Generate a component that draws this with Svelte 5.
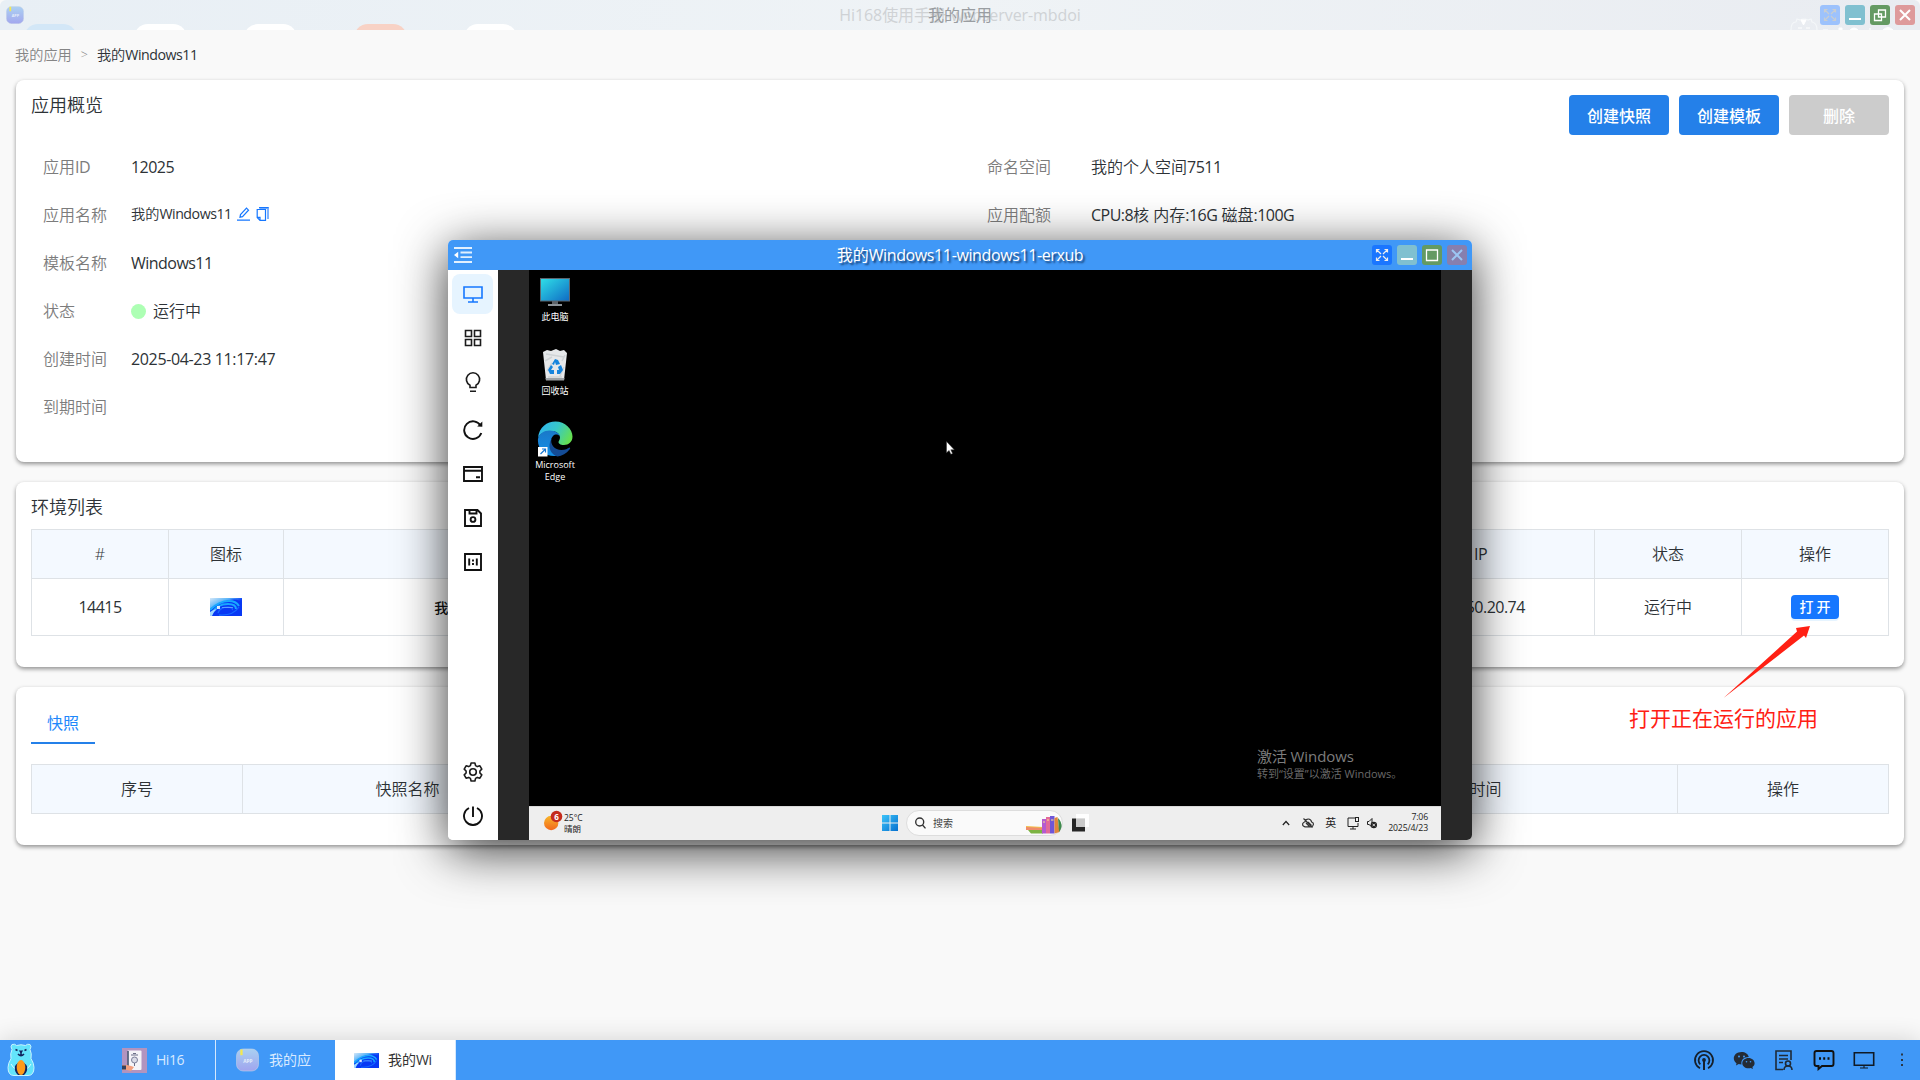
<script>
  const left = [
    { label: '应用ID', value: '12025' },
    { label: '应用名称', cjk: '我的', value: 'Windows11', small: true },
    { label: '模板名称', value: 'Windows11' },
    { label: '状态', cjk: '运行中', dot: true },
    { label: '创建时间', value: '2025-04-23 11:17:47', wide: true },
    { label: '到期时间' }
  ];
</script>

{#snippet bloom()}
  <svg class="bloom" viewBox="0 0 32 18" preserveAspectRatio="none">
    <defs>
      <linearGradient id="bl" x1="0" y1="0" x2="1" y2="1">
        <stop offset="0" stop-color="#d6e8f8" /><stop offset=".3" stop-color="#5ab4f8" />
        <stop offset=".55" stop-color="#0a3cf5" /><stop offset="1" stop-color="#0030e0" />
      </linearGradient>
    </defs>
    <rect width="32" height="18" fill="url(#bl)" />
    <path d="M0 11Q8 4 20 2q9-2 12 4v12H0z" fill="#0838f4" />
    <path d="M0 12Q9 3 19 3q7 0 10 5M2 15Q7 6 18 6q8 0 8 5" fill="none" stroke="#18a8ff" stroke-width="2" />
    <path d="M9 17q14 1 20-8M8 15q2-6 10-6 6 1 4 3" fill="none" stroke="#1668ff" stroke-width="1.300" />
    <path d="M0 14q4-3 7-3-4 3-5 7H0z" fill="#9fd8ff" />
    <rect x="7" y="8" width="3" height="3" fill="#fff" opacity=".85" />
    <path d="M12 9.500h11" stroke="#8cc8ff" opacity=".6" />
  </svg>
{/snippet}

{#snippet appIcon()}
  <svg viewBox="0 0 24 24">
    <defs>
      <linearGradient id="ap" x1="0" y1="0" x2="0" y2="1">
        <stop offset="0" stop-color="#a9d0f2" /><stop offset="1" stop-color="#a0a4ee" />
      </linearGradient>
    </defs>
    <rect x=".5" y=".5" width="23" height="23" rx="7" fill="url(#ap)" stroke="#c5d3e6" stroke-width=".6" />
    <rect x="4.5" y="1" width="2.4" height="6" fill="#f4e84e" />
    <text x="12.5" y="15" text-anchor="middle" class="apptext">APP</text>
  </svg>
{/snippet}

<div class="desk">
  <header class="bar">
    <div class="bumps"><i class="b1"></i><i></i><i></i><i class="b4"></i><i></i></div>
    <div class="app-ic">{@render appIcon()}</div>
    <span class="ghost">Hi168使用手册-webserver-mbdoi</span>
    <span class="bar-title">我的应用</span>
    <svg class="mark" width="110" height="14" viewBox="0 0 110 14">
      <path d="M2 13q0-8 5-8l1-3 3 1q4-2 8 0l3-1 1 3q5 1 5 8" fill="none" stroke="#f4f7f9" stroke-width="1.2" />
      <path d="M12 3h5l-2.500 5z M9 11h4 M17 11h4 M34 13h5M50 13v-2h3v2M61 13q4-4 8 0M81 13v-2M94 13q5-5 10 0" fill="#fff" stroke="#fff" />
    </svg>
    <div class="win-btns">
      <span class="full pale"><svg viewBox="0 0 20 20"><path d="M4.500 7.500v-3h3M4.500 4.500L9 9M12.500 4.500h3v3M15.500 4.500L11 9M4.500 12.500v3h3M4.500 15.500L9 11M12.500 15.500h3v-3M15.500 15.500L11 11" fill="none" stroke="#c8cdd2" stroke-width="1.200" /></svg></span>
      <span class="min"><svg viewBox="0 0 20 20"><path d="M4 14h12" stroke="#fff" stroke-width="2" /></svg></span>
      <span class="max"><svg viewBox="0 0 20 20"><path d="M8.500 5h7v7h-7zM4.500 9h7v6.500h-7z" fill="none" stroke="#fff" stroke-width="1.300" /></svg></span>
      <span class="close"><svg viewBox="0 0 20 20"><path d="M5 5l10 10M15 5L5 15" stroke="#fff" stroke-width="2" /></svg></span>
    </div>
  </header>

  <main>
    <nav><span class="grey">我的应用</span><span class="grey sep">&gt;</span><span>我的<b class="en">Windows11</b></span></nav>

    <section class="card overview">
      <div class="head">
        <h2>应用概览</h2>
        <div class="actions"><button>创建快照</button><button>创建模板</button><button class="off">删除</button></div>
      </div>
      <div class="cols">
        <dl class="lcol">
          {#each left as r}
            <div class="row">
              <dt>{#if r.label === '应用ID'}应用<b class="en">ID</b>{:else}{r.label}{/if}</dt>
              <dd class:small={r.small}>
                {#if r.dot}<i class="dot"></i>{/if}{r.cjk ?? ''}{#if r.value}<b class="en" class:wide={r.wide}>{r.value}</b>{/if}
                {#if r.small}
                  <svg class="edit" viewBox="0 0 13 14" fill="none" stroke="#1677ff" stroke-width="1.200"><path d="M0 13.200h13M3 10.200l.5-2.600L9.500 1.200l2 2-6 6.400z" /></svg>
                  <svg class="copy" viewBox="0 0 13 14"><path d="M3.500 0H13v12h-2V2H3.500z" fill="#7fb3ff" /><path d="M3 .6h9.500" stroke="#1677ff" stroke-width="1.200" /><path d="M1.200 2.500h8.300v10.800H4L1.200 10.500zM1.200 10.300H4v3" fill="none" stroke="#1677ff" stroke-width="1.200" /></svg>
                {/if}
              </dd>
            </div>
          {/each}
        </dl>
        <dl class="rcol">
          <div class="row"><dt>命名空间</dt><dd>我的个人空间<b class="en">7511</b></dd></div>
          <div class="row"><dt>应用配额</dt><dd><b class="en">CPU:8</b>核&nbsp;内存<b class="en">:16G</b>&nbsp;磁盘<b class="en">:100G</b></dd></div>
        </dl>
      </div>
    </section>

    <section class="card env">
      <h2>环境列表</h2>
      <div class="table t1">
        <div class="th">#</div><div class="th">图标</div><div class="th">名称</div><div class="th"></div><div class="th"><b class="en">IP</b></div><div class="th">状态</div><div class="th">操作</div>
        <div><b class="en">14415</b></div><div>{@render bloom()}</div><div class="name">我的Windows11-windows11-erxub</div><div></div><div><b class="en">10.150.20.74</b></div><div>运行中</div><div><span class="open">打 开</span></div>
      </div>
    </section>

    <section class="card snap">
      <div class="tab">快照</div>
      <div class="table t2">
        <div class="th">序号</div><div class="th">快照名称</div><div class="th"></div><div class="th">创建时间</div><div class="th">操作</div>
      </div>
    </section>
  </main>

  <footer>
    <svg class="bear" width="28" height="34" viewBox="0 0 28 34">
      <path d="M5 1.500q3-1 4.500 1 4.500-1.500 9 0 2-2 4.500-1 2 2 0 5 2 4 1 9 3 5 3 9 0 8-6 8H7q-6 0-6-8 0-4 3-9-1-5 1-9-2-3 0-5z" fill="#63e4fb" stroke="#c8f4ff" />
      <path d="M4 21q2 4 6 6M24 21q-2 4-6 6" stroke="#e0faff" fill="none" />
      <path d="M8 23q6-8 12 0 1 6-3 9h-6q-4-3-3-9z" fill="#12245e" />
      <ellipse cx="14" cy="24.500" rx="4.300" ry="7.500" fill="#ff9a1a" />
      <path d="M8.500 6.500l2 1M19.500 6.500l-2 1M14 9v3M11 11q3 3.500 6 0" stroke="#12245e" stroke-width="1.500" fill="none" /><path d="M11.800 7.600h4.400L14 10.500z" fill="#12245e" />
    </svg>
    <div class="task first">
      <svg width="25" height="25" viewBox="0 0 25 25"><rect width="25" height="25" fill="#b294bf" /><rect x="5.500" y="2.500" width="14" height="19.500" rx="1" fill="#f4f4f8" /><path d="M6 3v19" stroke="#3b4968" stroke-width="1.500" /><circle cx="12.500" cy="12" r="3" fill="#d9dbe6" stroke="#7b809a" /><path d="M9 7h7M11 5.500h3M12.500 15v3" stroke="#6a6f88" /><path d="M0 17h5l4 1 3 1-3 4-4-1H0z" fill="#f3a07e" /><path d="M0 17.500h4v4H0z" fill="#34415e" /></svg>
      <span><b class="en">Hi16</b></span>
    </div>
    <div class="task second"><div class="t-app">{@render appIcon()}</div><span>我的应</span></div>
    <div class="task active">{@render bloom()}<span>我的<b class="en">Wi</b></span></div>
    <div class="tray">
      <svg viewBox="0 0 22 22" fill="none" stroke="#16202c" stroke-width="1.800"><path d="M7 19.200a9 9 0 1 1 8 0" /><path d="M7.300 15.300a5.400 5.400 0 1 1 7.400 0" /><path d="M11 11.500V21" stroke-width="2" /><circle cx="11" cy="11" r="1" fill="#16202c" /></svg>
      <svg viewBox="0 0 22 22" fill="#242b35"><path d="M8.500 3C4 3 .8 5.900.8 9.300c0 2 1 3.700 2.700 4.900L3 16.500l2.700-1.400q1.300.4 2.800.4c-1-4.500 2.500-7.600 7.300-7.500C15.200 5 12.200 3 8.500 3z" /><path d="M15.500 9c-3.500 0-6.200 2.300-6.200 5.200 0 2.800 2.700 5.100 6.200 5.100q1.200 0 2.300-.4l2.200 1.200-.6-2c1.300-1 2.200-2.300 2.200-3.900 0-2.900-2.700-5.200-6.100-5.200z" /><g fill="#4098f7"><circle cx="6" cy="7.500" r="1" /><circle cx="11" cy="7.500" r="1" /><circle cx="13.500" cy="12.800" r=".8" /><circle cx="17.500" cy="12.800" r=".8" /></g></svg>
      <svg viewBox="0 0 22 22" fill="none" stroke="#1f2a36" stroke-width="1.600"><path d="M10 20.500H3V2h15v9M6 6.500h9M6 10h9M6 13.500h4" /><circle cx="15" cy="14.500" r="2.500" /><path d="M11 21q0-4 4-4t4 4" /></svg>
      <svg viewBox="0 0 22 22" fill="none" stroke="#111" stroke-width="1.900"><path d="M3.500 2h15q2 0 2 2v11q0 2-2 2H9l-3.500 3v-3h-2q-2 0-2-2V4q0-2 2-2z" /><path d="M6 9.500h2M10.200 9.500h2M14.500 9.500h2" stroke-width="2.500" /></svg>
      <svg viewBox="0 0 22 22" fill="none" stroke="#101a26" stroke-width="1.600"><path d="M1.300 3.800h19.400v12.400H1.300z" /><path d="M7 19h8M11 16.500V19" stroke-width="1.100" /></svg>
      <svg class="dots" viewBox="0 0 22 22" fill="#2a3644"><path d="M10 4.500h2v2h-2zM10 10h2v2h-2zM10 15h2v2h-2z" /></svg>
    </div>
  </footer>

  <div class="window">
    <div class="w-head">
      <svg class="collapse" viewBox="0 0 18 18" fill="none" stroke="#fff" stroke-width="1.800"><path d="M0 2h18M6.500 6.500H18M6.500 11.200H18M0 16h18" opacity=".85" /><path d="M0 9l4.200-3.300v6.600z" fill="#fff" stroke="none" /></svg>
      <span class="w-title">我的<b class="en">Windows11-windows11-erxub</b></span>
      <div class="win-btns">
        <span class="full"><svg viewBox="0 0 20 20"><path d="M4.500 7.500v-3h3M4.500 4.500L9 9M12.500 4.500h3v3M15.500 4.500L11 9M4.500 12.500v3h3M4.500 15.500L9 11M12.500 15.500h3v-3M15.500 15.500L11 11" fill="none" stroke="#eee" stroke-width="1.200" /></svg></span>
        <span class="min"><svg viewBox="0 0 20 20"><path d="M4 14h12" stroke="#fff" stroke-width="2" /></svg></span>
        <span class="max"><svg viewBox="0 0 20 20"><path d="M4.500 5h11v10.500h-11zM4 5h12" fill="none" stroke="#fff" stroke-width="1.300" /></svg></span>
        <span class="close dim"><svg viewBox="0 0 20 20"><path d="M5 5l10 10M15 5L5 15" stroke="#9cc6f3" stroke-width="2" /></svg></span>
      </div>
    </div>
    <div class="w-body">
      <aside>
        <div class="tool on"><svg viewBox="0 0 20 20" stroke="#1677ff"><path d="M1 3h18v11H1zM10 14v4M5 18h10" /></svg></div>
        <div class="tool g"><svg viewBox="0 0 20 20"><path d="M2.500 2.500h6v6h-6zM11.500 2.500h6v6h-6zM2.500 11.500h6v6h-6zM11.500 11.500h6v6h-6z" /></svg></div>
        <div class="tool l"><svg viewBox="0 0 20 20"><path d="M7 15.500v-2.200A6.600 6.600 0 1 1 13 13.300v2.200zM7 19.200h6" /></svg></div>
        <div class="tool r"><svg class="bold" viewBox="0 0 20 20"><path d="M18.300 13A8.800 8.800 0 1 1 17.500 5.500" /><path d="M19.300 1.500v5.300l-5.100-.4z" class="solid" /></svg></div>
        <div class="tool c"><svg class="bold" viewBox="0 0 20 20"><path d="M1 3h18v14H1zM1 6.800h18M13 13.300h4" /></svg></div>
        <div class="tool"><svg class="bold" viewBox="0 0 20 20"><path d="M2 2h12.500L18 5.500V18H2zM6.500 2v3.500h7V2" /><circle cx="10" cy="11.500" r="2.400" /></svg></div>
        <div class="tool"><svg class="bold" viewBox="0 0 20 20"><path d="M2 2h16v16H2z" /><path d="M6.200 6.500v7M13.800 6.500v7M10 7.500v2M10 11v2" /></svg></div>
        <div class="space"></div>
        <div class="tool"><svg viewBox="0 0 20 20" stroke-linejoin="round"><path d="M8.100 1h3.800l.7 2.600 1.700 1 2.600-.8 1.900 3.300-1.900 1.900v2l1.900 1.900-1.900 3.300-2.600-.8-1.700 1-.7 2.600H8.100l-.7-2.600-1.700-1-2.600.8-1.900-3.300L3.100 11V9L1.200 7.100l1.900-3.300 2.600.8 1.700-1z" /><circle cx="10" cy="10" r="3.300" /></svg></div>
        <div class="tool"><svg class="bold" viewBox="0 0 20 20"><path d="M6 2a9 9 0 1 0 8 0M10 .5v10.500" /></svg></div>
      </aside>
      <div class="stage">
        <div class="screen">
          <div class="wall">
            <div class="icons">
              <div class="ic pc">
                <svg width="30" height="29" viewBox="0 0 30 29"><defs><linearGradient id="pc" x1="0" y1="0" x2="1" y2="1"><stop offset="0" stop-color="#2fe0e8" /><stop offset="1" stop-color="#0f6ac4" /></linearGradient></defs><rect x=".5" y=".5" width="29" height="22.500" fill="url(#pc)" stroke="#5c6670" /><path d="M12 23h6v3h-6z" fill="#5d6369" /><path d="M8 26h14v2H8z" fill="#8b9298" /></svg>
                <span>此电脑</span>
              </div>
              <div class="ic bin">
                <svg width="26" height="32" viewBox="0 0 26 32"><path d="M1 3l4-2 4 1 5-2 4 2 4-1 3 3-3 27H4z" fill="#e6e8ea" /><path d="M4 5l18 3M3 12l7-4M20 12l3-6M5 22l5-8M18 27l4-9M6 28h14" stroke="#cfd3d6" stroke-width="1.500" /><path d="M3.500 29h19l-.5 2.500H4z" fill="#9da2a6" /><g fill="#1584dd"><path d="M10 15l3-5 3 1 2 4-4 1-1-3-1 3z" /><path d="M19 16l2 5-3 4h-3v-4h2l-1-3z" /><path d="M9 16l-3 5 2 4h4v-4H9l2-3z" /></g></svg>
                <span>回收站</span>
              </div>
              <div class="ic edge">
                <svg width="36" height="36" viewBox="0 0 36 36">
                  <defs><linearGradient id="e1" x1="0" y1=".2" x2="1" y2=".6"><stop offset="0" stop-color="#2fb4f2" /><stop offset=".5" stop-color="#38c8c8" /><stop offset="1" stop-color="#66e04f" /></linearGradient><linearGradient id="e2" x1="0" y1="0" x2="0" y2="1"><stop offset="0" stop-color="#1a78c8" /><stop offset="1" stop-color="#1390e8" /></linearGradient></defs>
                  <path d="M1 17C2 6 10 .5 18.500.5 28 .5 35.500 8 35.500 15.500c0 5.500-4 8.500-8.500 8.500-4 0-5.500-1.500-5.500-3 0-1 1.500-2 1.500-4.500 0-3.500-3.500-6.500-8.500-6.500C8 10 2.500 13 1 17z" fill="url(#e1)" />
                  <path d="M1 18c1-5.500 6-8.500 11.500-8.500 6 0 10 3 10.500 6-2-2.500-5-2.500-7-.5-4 4-2.500 14 6 19.500C10 37.500 0 29 1 18z" fill="url(#e2)" />
                  <path d="M14.500 17.500c-1.500 6 3 11.500 10 11.500 4 0 6-1.500 8-2.500 1 0 .8 1 0 2-3 4-7.500 6.500-12 7-6-1.500-11-9-6-18z" fill="#144c96" />
                  <rect x="1" y="26" width="9.500" height="9.500" fill="#fff" /><path d="M3.500 33l5-5M5 28h3.500v3.500" fill="none" stroke="#1677d2" stroke-width="1.200" />
                </svg>
                <span>Microsoft<br />Edge</span>
              </div>
            </div>
            <svg class="cursor" width="9" height="14" viewBox="0 0 9 14"><path d="M.5.5v11.200l2.600-2.300 1.800 3.900 1.700-.8-1.800-3.700h3.500z" fill="#fff" stroke="#333" stroke-width=".5" /></svg>
            <div class="activate"><p>激活 Windows</p><small>转到“设置”以激活 Windows。</small></div>
          </div>
          <div class="wbar">
            <div class="weather">
              <svg width="20" height="22" viewBox="0 0 20 22"><defs><linearGradient id="sn" x1="0" y1="0" x2="0" y2="1"><stop offset="0" stop-color="#f8b62a" /><stop offset="1" stop-color="#f2671c" /></linearGradient></defs><circle cx="7.200" cy="13" r="7.200" fill="url(#sn)" /><circle cx="12.500" cy="6.500" r="5.800" fill="#c42b1c" /><text x="12.500" y="9.500" text-anchor="middle" class="badge">6</text></svg>
              <div>25°C<br />晴朗</div>
            </div>
            <svg class="start" width="16" height="18" viewBox="0 0 16 18"><defs><linearGradient id="st" x1="0" y1="0" x2="1" y2="1"><stop offset="0" stop-color="#3cc4fa" /><stop offset="1" stop-color="#0670cf" /></linearGradient></defs><path d="M0 1h7.500v7.500H0zM8.500 1H16v7.500H8.500zM0 9.500h7.500V17H0zM8.500 9.500H16V17H8.500z" fill="url(#st)" /></svg>
            <div class="search">
              <svg width="11" height="12" viewBox="0 0 11 12" fill="none" stroke="#333" stroke-width="1.400"><circle cx="4.700" cy="5" r="4" /><path d="M7.500 8l3 3.400" /></svg>
              <span>搜索</span>
              <svg class="books" width="36" height="19" viewBox="0 0 36 19"><path d="M0 12h17v3H0z" fill="#ef8b6b" /><path d="M2 15h15v3.500H5z" fill="#7cb342" /><path d="M0 11.500l17 1" stroke="#f3c04b" /><path d="M16 4h4v14.500h-4z" fill="#b45bd0" /><path d="M20 2h4v16.500h-4z" fill="#e26a9a" /><path d="M24 1h4.500v17.500H24z" fill="#6f56d8" /><path d="M28.500 3l3-1 2 15-5 1.500z" fill="#e0863c" /><path d="M32 3q4 4 3.500 9-1 4-2.500 5z" fill="#3f8a4d" /><path d="M21 5h2M25 5h2.500M17 7h2" stroke="#ffe28a" /></svg>
            </div>
            <svg class="tv" width="17" height="18" viewBox="0 0 17 18"><path d="M0 4.500h13V17.500H0z" fill="#262626" /><path d="M4 0h13v13H4z" fill="#fff" opacity=".9" /><path d="M4 4.500h9V13H4z" fill="#c9c9c9" /></svg>
            <div class="wtray">
              <svg width="8" height="8" viewBox="0 0 8 8"><path d="M.8 6L4 2.500 7.200 6" fill="none" stroke="#222" stroke-width="1.200" /></svg>
              <svg width="12" height="12" viewBox="0 0 12 12" fill="none" stroke="#333" stroke-width="1.200"><path d="M3 9.800Q0 9 .8 6.500 1.500 5 2.800 5 3.500 2 6.300 2q2.800 0 3.300 3 2 .5 1.800 2.500-.4 2-2.400 2.300zM1.500 1.500l9 9M4 6l3.500 3.500M6 5l3.500 3.500" /></svg>
              <span class="ying">英</span>
              <svg width="12" height="13" viewBox="0 0 12 13" fill="none" stroke="#222"><path d="M8 1H1v8.500h10V6M3 12h6M6 9.500V12" /><rect x="8.500" y=".5" width="3" height="4" /></svg>
              <svg width="10" height="12" viewBox="0 0 10 12"><path d="M.5 4.500v3H2l3 2.500V1.500L2 4.500z" fill="none" stroke="#222" /><circle cx="6.800" cy="8" r="3.200" fill="#222" /><path d="M5.500 6.700l2.600 2.600M8.100 6.700L5.500 9.300" stroke="#fff" stroke-width=".8" /></svg>
              <div class="clock">7:06<br />2025/4/23</div>
            </div>
          </div>
        </div>
      </div>
    </div>
  </div>

  <div class="note">打开正在运行的应用</div>
  <svg class="arrow" width="90" height="74" viewBox="0 0 90 74"><path d="M.5 73L74 6.500 73 3 87 1l-4 12-2-2.500z" fill="#ff2014" /></svg>
</div>

<style>
  :global(body) { margin: 0; overflow: hidden; }
  .desk, .desk * { box-sizing: border-box; }
  .desk { position: relative; width: 1920px; height: 1080px; display: flex; flex-direction: column; background: #f9f9f9; font: 16px/1.5 'Open Sans', 'Noto Sans CJK SC', sans-serif; font-weight: 350; color: #2d3236; overflow: hidden; }
  .en { font-weight: 400; letter-spacing: -0.033em; }
  .wide { letter-spacing: -0.022em; }
  svg { display: block; flex: none; }
  h2, dl, dd, dt, p { margin: 0; font-weight: inherit; }

  .bar { position: relative; height: 30px; flex: none; background: linear-gradient(90deg, #e8eff5, #eff3f6 50%, #e9ecf1); overflow: hidden; border-radius: 6px 6px 0 0; }
  .app-ic { position: absolute; left: 6px; top: 6px; width: 18px; height: 18px; opacity: .95; }
  .app-ic svg, .t-app svg { width: 100%; height: 100%; }
  .apptext { font: 700 5px 'Open Sans', sans-serif; fill: #e4edfb; }
  .bumps { display: flex; gap: 57px; padding: 24px 0 0 24px; }
  .bumps i { width: 53px; height: 30px; border-radius: 14px; background: #fff; }
  .bumps .b1 { background: #d3e7f7; }
  .bumps .b4 { background: #f8d2c5; }
  .ghost, .bar-title { position: absolute; left: 0; right: 0; top: 3px; text-align: center; line-height: 24px; font-weight: 400; color: #cfd2d5; letter-spacing: -0.005em; }
  .bar-title { color: #999da1; letter-spacing: 0; }
  .mark { position: absolute; right: 21px; top: 17px; }
  .win-btns { position: absolute; right: 5px; top: 5px; display: flex; gap: 5px; }
  .win-btns span { width: 20px; height: 20px; border-radius: 3px; }
  .full { background: #1a76ff; }
  .pale { background: #9dc2fc; }
  .min { background: #80c0d0; }
  .max { background: #649a63; }
  .close { background: #de9a9b; }
  .dim { background: #877fae; }

  main { height: 1010px; flex: none; }
  nav { display: flex; height: 50px; align-items: center; padding: 0 0 1px 15px; font-size: 14.2px; }
  .grey { color: #858585; }
  .sep { margin: 1px 9px 0 9px; font-size: 12.500px; }
  .card { margin: 0 16px 20px; background: #fff; border-radius: 8px; padding: 15px; box-shadow: 0 2px 4px rgba(0,0,0,.42); }
  h2 { font-size: 18px; line-height: 21px; }
  .overview { height: 382px; }
  .head { display: flex; justify-content: space-between; height: 48px; }
  .actions { display: flex; gap: 10px; }
  button { width: 100px; height: 40px; border: 0; border-radius: 4px; background: #2480e9; color: #fff; font: 500 16px 'Noto Sans CJK SC', sans-serif; padding: 0 0 1px; }
  .off { background: #ccc; }
  .cols { display: flex; }
  .lcol { width: 956px; padding-left: 12px; flex: none; }
  .row { display: flex; height: 48px; align-items: center; }
  .lcol dt { width: 88px; }
  .rcol dt { width: 104px; }
  dt { color: #7c7c7c; }
  dd { display: flex; align-items: center; }
  .small { font-size: 14.2px; position: relative; top: -1px; }
  .edit { width: 13px; height: 14px; margin-left: 5px; }
  .copy { width: 13px; height: 14px; margin-left: 6px; }
  .dot { width: 15px; height: 15px; border-radius: 50%; background: #adffb4; margin-right: 7px; }

  .env { height: 185px; }
  .env h2 { height: 32px; line-height: 20px; }
  .table { display: grid; width: 1858px; border: solid #dee2e6; border-width: 1px 0 0 1px; }
  .table > div { border: solid #dee2e6; border-width: 0 1px 1px 0; display: flex; align-items: center; justify-content: center; }
  .table > .th { background: #f4f9ff; }
  .t1 { grid-template-columns: 137px 115px 520px 563px 228px 147px 147px; grid-template-rows: 49px 57px; }
  .table > .name { font-size: 14px; font-weight: 500; letter-spacing: -0.2px; color: #111; }
  .bloom { width: 32px; height: 18px; }
  .open { width: 48px; height: 24px; border-radius: 4px; background: #1677ff; color: #fff; font: 500 14px/23px 'Noto Sans CJK SC', sans-serif; text-align: center; box-shadow: 0 2px 0 #e6f4ff; }
  .snap { height: 158px; }
  .tab { width: 64px; height: 42px; border-bottom: 2px solid #2480e9; color: #1e88fb; text-align: center; line-height: 42px; margin-bottom: 20px; font-weight: 400; }
  .t2 { grid-template-columns: 211px 330px 689px 416px 211px; grid-template-rows: 49px; }

  footer { position: relative; height: 40px; flex: none; display: flex; align-items: center; background: #4098f7; box-shadow: 0 0 24px rgba(0,0,0,.16); font-size: 14px; }
  .bear { margin: 0 0 0 7px; }
  .task { height: 40px; display: flex; align-items: center; gap: 9px; color: #d8eaff; border-right: 1px solid #d5e8fd; }
  .task span { position: relative; top: -1px; font-weight: 400; }
  .first { width: 181px; padding-left: 87px; }
  .second { width: 119px; padding-left: 20px; gap: 10px; border: 0; }
  .active { width: 121px; padding-left: 19px; background: #fff; color: #333; }
  .active .bloom { width: 25px; height: 15px; }
  .t-app { width: 23px; height: 24px; }
  .tray { margin-left: auto; display: flex; gap: 18px; padding-right: 7px; }
  .tray svg { width: 22px; height: 22px; }
  .tray .dots { margin-left: -2px; }

  .window { position: absolute; left: 448px; top: 240px; width: 1024px; height: 600px; border-radius: 5px; box-shadow: 0 10px 50px rgba(0,0,0,.8); }
  .w-head { position: relative; height: 30px; background: #4098f7; border-radius: 5px 5px 0 0; display: flex; align-items: center; padding-left: 6px; }
  .collapse { width: 18px; height: 18px; }
  .w-title { position: absolute; left: 0; right: 0; text-align: center; color: #fff; font-weight: 400; text-shadow: 2px 2px 2px #143b6c; }
  .w-title .en { font-weight: 400; letter-spacing: -.024em; }
  .w-body { height: 570px; display: flex; border-radius: 0 0 5px 5px; overflow: hidden; }
  aside { width: 50px; background: #fff; display: flex; flex-direction: column; align-items: center; padding: 4px 1px 4px 0; gap: 4px; }
  .tool { width: 41px; height: 40px; border-radius: 8px; display: flex; align-items: center; justify-content: center; flex: none; }
  .tool svg { width: 20px; height: 20px; fill: none; stroke: #1c1c1c; stroke-width: 1.6; }
  .tool .bold { stroke-width: 1.900; stroke: #111; }
  .tool .solid { fill: #111; stroke: none; }
  .tool.on svg { stroke: #1677ff; }
  .on { background: #e6f4ff; }
  .r { margin-top: 4px; }
  .space { flex: 1; }
  .stage { flex: 1; background: #282828; display: flex; justify-content: center; }
  .screen { width: 912px; display: flex; flex-direction: column; }
  .wall { position: relative; height: 536px; background: #000; }
  .icons { width: 52px; padding-top: 8px; display: flex; flex-direction: column; align-items: center; color: #fff; font-size: 9px; line-height: 12px; text-align: center; font-weight: 400; }
  .ic { display: flex; flex-direction: column; align-items: center; }
  .pc { height: 71px; gap: 4px; }
  .bin { height: 72px; gap: 4px; }
  .edge { gap: 2px; }
  .cursor { position: absolute; left: 417px; top: 171px; }
  .activate { position: absolute; left: 728px; top: 475px; color: #7d7d7d; font-weight: 400; }
  .activate p { font-size: 15px; line-height: 22px; letter-spacing: -.1px; }
  .activate small { display: block; margin-top: -1px; font: 11px/16px 'Open Sans', 'Noto Sans CJK SC', sans-serif; white-space: nowrap; color: #6a6a6a; }
  .wbar { height: 34px; background: #eee; border-top: 1px solid #d9d9d9; display: flex; align-items: center; font-weight: 400; color: #222; padding: 0 0 1px 15px; }
  .weather { display: flex; gap: 0; font-size: 8.500px; line-height: 11px; width: 338px; }
  .weather svg { margin-top: -2px; }
  .badge { font: 700 8px 'Open Sans', sans-serif; fill: #fff; }
  .search { width: 157px; height: 26px; margin-left: 8px; border-radius: 13px; background: #fafafa; border: 1px solid #ddd; display: flex; align-items: center; padding-left: 8px; gap: 7px; font-size: 10px; }
  .search span { color: #444; }
  .books { margin: 2px 0 0 auto; }
  .tv { margin-left: 9px; }
  .wtray { margin-left: auto; display: flex; align-items: center; padding-right: 13px; font-size: 9px; }
  .wtray svg:nth-child(2) { margin-left: 12px; }
  .ying { font-size: 11px; margin: 0 11px; }
  .wtray svg:nth-child(5) { margin: 0 11px 0 8px; }
  .clock { text-align: right; line-height: 11.500px; font-size: 8.700px; letter-spacing: -.15px; }

  .note { position: absolute; left: 1629px; top: 701px; font: 400 21px/32px 'Noto Sans CJK SC', sans-serif; color: #ff2014; white-space: nowrap; }
  .arrow { position: absolute; left: 1723px; top: 625px; }
</style>
